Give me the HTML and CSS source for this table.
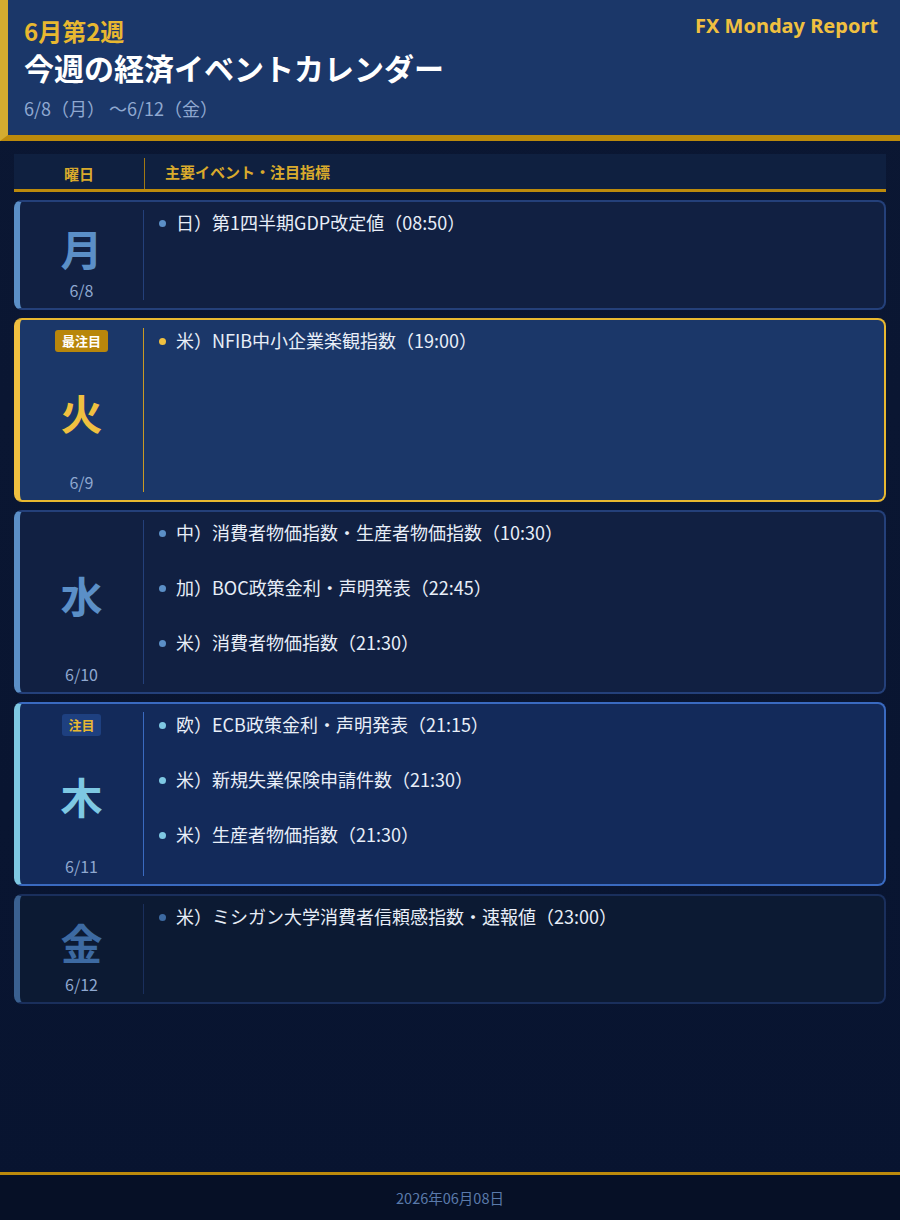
FILE: index.html
```html
<!DOCTYPE html>
<html lang="ja">

<head>
    <meta charset="UTF-8">
    <meta name="viewport" content="width=device-width, initial-scale=1.0">
    <title>今週の経済イベントカレンダー</title>
    <link rel="stylesheet" href="styles.css">
</head>

<body>

    <header id="masterhead">
        <div class="head-left">
            <div class="week">6月第2週</div>
            <h1 class="title">今週の経済イベントカレンダー</h1>
            <div class="range">6/8（月） 〜6/12（金）</div>
        </div>
        <div class="brand">FX Monday Report</div>
    </header>

    <main>
        <div class="table-head">
            <div class="th-day">曜日</div>
            <div class="th-event">主要イベント・注目指標</div>
        </div>

        <div class="rows">
            <section class="row mon">
                <div class="day-col">
                    <div class="day">月</div>
                    <div class="date">6/8</div>
                </div>
                <ul class="events">
                    <li>日）第1四半期GDP改定値（08:50）</li>
                </ul>
            </section>

            <section class="row tue">
                <div class="day-col tall">
                    <span class="badge badge-top">最注目</span>
                    <div class="day">火</div>
                    <div class="date">6/9</div>
                </div>
                <ul class="events">
                    <li>米）NFIB中小企業楽観指数（19:00）</li>
                </ul>
            </section>

            <section class="row wed">
                <div class="day-col">
                    <div class="day">水</div>
                    <div class="date">6/10</div>
                </div>
                <ul class="events">
                    <li>中）消費者物価指数・生産者物価指数（10:30）</li>
                    <li>加）BOC政策金利・声明発表（22:45）</li>
                    <li>米）消費者物価指数（21:30）</li>
                </ul>
            </section>

            <section class="row thu">
                <div class="day-col">
                    <span class="badge badge-note">注目</span>
                    <div class="day">木</div>
                    <div class="date">6/11</div>
                </div>
                <ul class="events">
                    <li>欧）ECB政策金利・声明発表（21:15）</li>
                    <li>米）新規失業保険申請件数（21:30）</li>
                    <li>米）生産者物価指数（21:30）</li>
                </ul>
            </section>

            <section class="row fri">
                <div class="day-col">
                    <div class="day">金</div>
                    <div class="date">6/12</div>
                </div>
                <ul class="events">
                    <li>米）ミシガン大学消費者信頼感指数・速報値（23:00）</li>
                </ul>
            </section>
        </div>
    </main>

    <footer class="foot">2026年06月08日</footer>

</body>

</html>
```

FILE: styles.css
```css
body {
    font-family: "Noto Sans CJK JP", "Noto Sans", sans-serif;
    margin: 0;
    min-height: 100vh;
    display: flex;
    flex-direction: column;
    background: linear-gradient(#0b1733, #081430);
    color: #e8eef8;
}

#masterhead {
    background-color: #1b3769;
    height: 141px;
    box-sizing: border-box;
    border-left: 8px solid #d4ac30;
    border-bottom: 6px solid #bc8a0c;
    padding: 15px 22px 0 16px;
    display: flex;
    justify-content: space-between;
    align-items: flex-start;
}

.week {
    font-size: 24px;
    line-height: 32px;
    font-weight: 700;
    color: #e8b830;
}

.title {
    font-size: 30px;
    line-height: 40px;
    font-weight: 700;
    color: #fff;
    margin: 0;
}

.range {
    font-size: 18px;
    line-height: 24px;
    color: #8fa8d0;
    margin-top: 9px;
}

.brand {
    font-family: "Noto Sans", sans-serif;
    font-size: 20px;
    line-height: 22px;
    font-weight: 700;
    color: #f0c040;
}

main {
    flex: 1;
    padding: 13px 14px;
}

.table-head {
    display: flex;
    height: 35px;
    background-color: #0f2040;
    border-bottom: 3px solid #bc8a0c;
    font-size: 15px;
    font-weight: 700;
    color: #d9aa2c;
}

.th-day {
    width: 130px;
    margin: 4px 0 0;
    border-right: 1px solid #a27812;
    display: flex;
    justify-content: center;
    align-items: center;
}

.th-event {
    padding-left: 20px;
    display: flex;
    align-items: center;
}

.rows {
    margin-top: 8px;
    display: flex;
    flex-direction: column;
    gap: 8px;
}

.row {
    display: flex;
    border: 2px solid #24407a;
    border-left: 6px solid #5b8fc7;
    border-radius: 8px;
    background-color: #112042;
    --accent: #5b8fc7;
}

.day-col {
    width: 124px;
    min-height: 90px;
    margin: 8px 0;
    border-right: 1px solid #24407a;
    display: flex;
    flex-direction: column;
    align-items: center;
    padding-top: 6px;
    box-sizing: border-box;
}

.day-col.tall {
    min-height: 164px;
}

.day {
    flex: 1;
    display: flex;
    align-items: center;
    font-size: 42px;
    line-height: 50px;
    font-weight: 700;
    color: var(--accent);
}

.date {
    font-size: 16px;
    line-height: 20px;
    color: #8fa8d0;
}

.badge {
    font-size: 13px;
    line-height: 22px;
    font-weight: 700;
    padding: 0 7px;
    border-radius: 3px;
    margin-top: -4px;
}

.badge-top {
    background-color: #b8860b;
    color: #fff;
}

.badge-note {
    background-color: #1e4080;
    color: #e8b830;
    padding: 0 6px;
}

.events {
    list-style: none;
    margin: 0;
    padding: 8px 15px 7px;
    font-size: 18px;
}

.events li {
    height: 55px;
    line-height: 24px;
    display: flex;
    align-items: flex-start;
}

.events li::before {
    content: "";
    width: 7px;
    height: 7px;
    border-radius: 50%;
    background-color: var(--accent);
    margin: 10px 10px 0 0;
    flex-shrink: 0;
}

.tue {
    background-color: #1b3769;
    border-color: #e8b830;
    border-left-color: #f0c040;
    --accent: #f0c040;
}

.tue .day-col {
    border-right-color: #c99a24;
}

.thu {
    background-color: #132a5a;
    border-color: #3a6ac0;
    border-left-color: #7ec8e3;
    --accent: #7ec8e3;
}

.thu .day-col {
    border-right-color: #3a6ac0;
}

.fri {
    background-color: #0c1a33;
    border-color: #1a2f5c;
    border-left-color: #3a6090;
    --accent: #3d6aa2;
}

.fri .day-col {
    border-right-color: #1a2f5c;
}

.foot {
    height: 45px;
    border-top: 3px solid #bc8a0c;
    background-color: #061026;
    color: #5a7aaa;
    font-size: 14.5px;
    display: flex;
    justify-content: center;
    align-items: center;
}
```
